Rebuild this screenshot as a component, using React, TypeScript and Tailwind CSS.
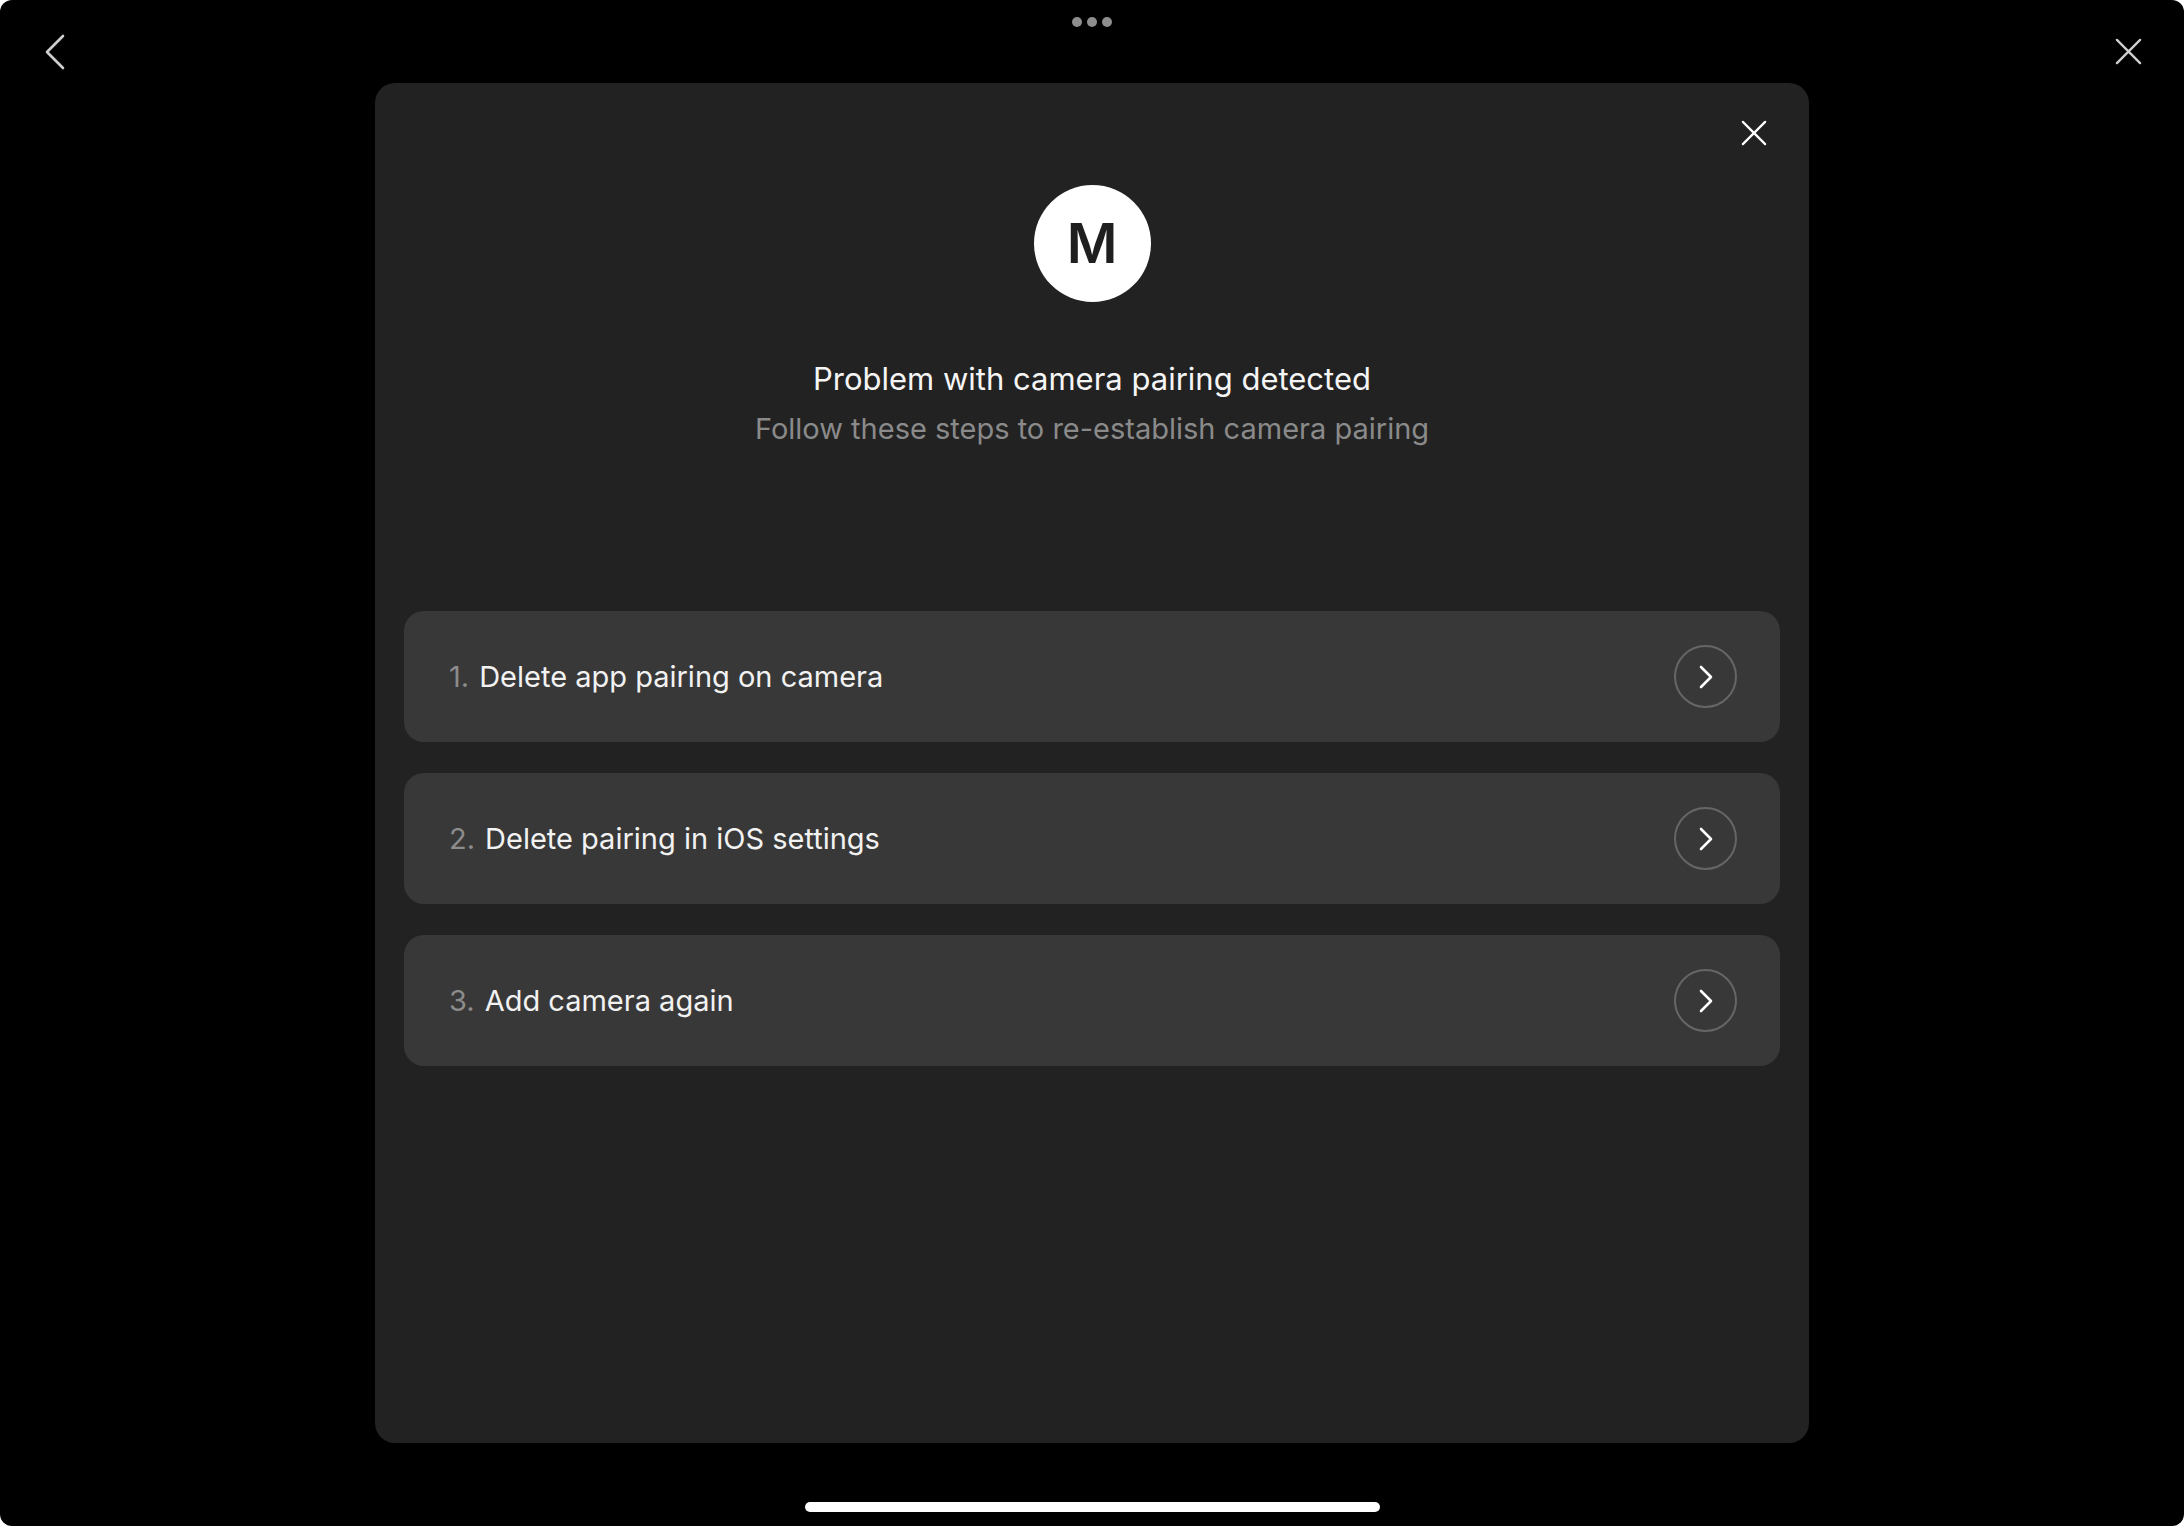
import React from 'react';

const steps = [
  {n: '1.', label: 'Delete app pairing on camera'},
  {n: '2.', label: 'Delete pairing in iOS settings'},
  {n: '3.', label: 'Add camera again'},
];

const font = {fontFamily: 'Inter, "Noto Sans", sans-serif'};

const ChevronRight = ({className}: {className?: string}) => (
  <svg viewBox="0 0 14 24" className={className} fill="none" stroke="currentColor" strokeWidth="2.6" strokeLinecap="round" strokeLinejoin="round">
    <path d="M2 2l10 10L2 22" />
  </svg>
);

const Cross = ({className}: {className?: string}) => (
  <svg viewBox="0 0 28 28" className={className} fill="none" stroke="currentColor" strokeWidth="2.4" strokeLinecap="round">
    <path d="M2 2l24 24M26 2L2 26" />
  </svg>
);

const StepRow = ({n, label}: {n: string; label: string}) => (
  <button
    type="button"
    className="w-full h-[131px] rounded-[20px] bg-[#383838] flex items-center justify-between pl-[45px] pr-[43px] text-left">
    <span className="flex items-baseline gap-[10px] text-[29px] leading-none">
      <span className="text-[#8c8c8c]">{n}</span>
      <span className="text-[#f2f2f2]">{label}</span>
    </span>
    <span className="w-[63px] h-[63px] rounded-full border-2 border-[#666666] flex items-center justify-center">
      <ChevronRight className="w-[14px] h-[24px] text-white" />
    </span>
  </button>
);

export default function App() {
  return (
    <div className="bg-white">
      <div className="w-[2184px] h-[1526px] bg-black rounded-[12px] overflow-hidden flex flex-col" style={font}>
        <div className="h-[83px] flex items-start justify-between pl-[44px] pr-[42px]">
          <svg viewBox="0 0 21 36" className="w-[21px] h-[36px] mt-[34px] text-[#cfcfcf]" fill="none" stroke="currentColor" strokeWidth="2.6" strokeLinecap="round" strokeLinejoin="round">
            <path d="M19 2L3 18l16 16" />
          </svg>
          <div className="flex gap-[5px] mt-[17px] ml-[4px]">
            <span className="w-[10px] h-[10px] rounded-full bg-[#8e8e8e]" />
            <span className="w-[10px] h-[10px] rounded-full bg-[#8e8e8e]" />
            <span className="w-[10px] h-[10px] rounded-full bg-[#8e8e8e]" />
          </div>
          <Cross className="w-[27px] h-[27px] mt-[38px] text-[#cfcfcf]" />
        </div>

        <div className="relative mx-auto w-[1434px] h-[1360px] rounded-[20px] bg-[#222222] px-[29px] flex flex-col items-center">
          <button type="button" className="absolute top-[37px] right-[42px]">
            <Cross className="w-[26px] h-[26px] text-white" />
          </button>

          <div className="mt-[102px] w-[117px] h-[117px] rounded-full bg-white flex items-center justify-center">
            <span className="text-[55px] font-semibold leading-none text-[#1f1f1f]">M</span>
          </div>

          <h2 className="mt-[59px] text-[31px] leading-[36px] text-[#f5f5f5]">Problem with camera pairing detected</h2>
          <p className="mt-[14px] text-[29px] leading-[36px] text-[#8a8a8a]">Follow these steps to re-establish camera pairing</p>

          <div className="mt-[164px] w-full flex flex-col gap-[31px]">
            {steps.map(s => (
              <StepRow key={s.n} n={s.n} label={s.label} />
            ))}
          </div>
        </div>

        <div className="mx-auto mt-[59px] w-[575px] h-[10px] rounded-full bg-white" />
      </div>
    </div>
  );
}
